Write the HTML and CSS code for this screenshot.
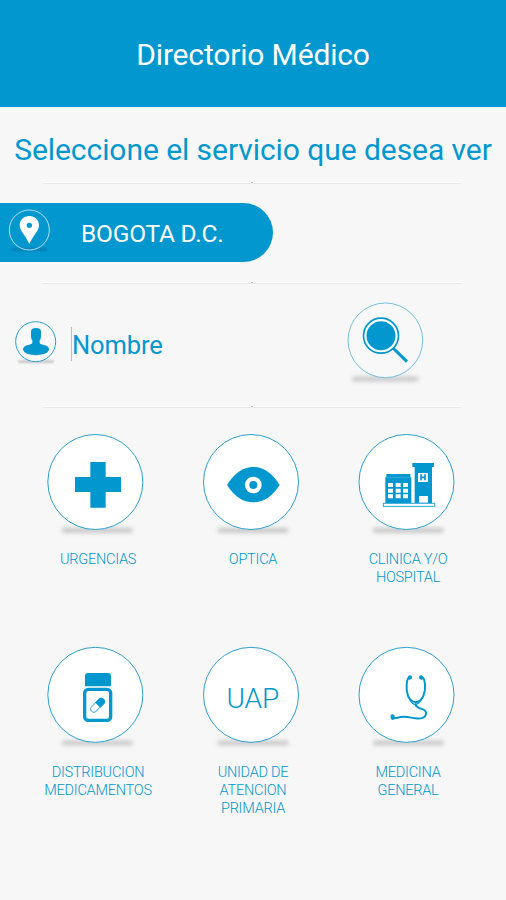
FILE: index.html
```html
<!DOCTYPE html>
<html lang="es">
<head>
<meta charset="utf-8">
<title>Directorio Médico</title>
<link rel="stylesheet" href="styles.css">
</head>
<body>
<svg class="defs" width="0" height="0" aria-hidden="true">
  <defs>
    <filter id="soft" x="-20%" y="-200%" width="140%" height="500%"><feGaussianBlur stdDeviation="6"/></filter>
    <filter id="soft-small" x="-20%" y="-150%" width="140%" height="400%"><feGaussianBlur stdDeviation="3"/></filter>
  </defs>
</svg>
<header class="header"><h1 class="title">Directorio Médico</h1></header>
<main>
  <h2 class="heading">Seleccione el servicio que desea ver</h2>
  <div class="rule"></div>
  <div class="city">
    <svg class="city-icon" viewBox="0 0 150 150">
      <rect class="city-shadow" x="36" y="135" width="106" height="9" rx="5" filter="url(#soft-small)"/>
      <circle class="city-ring" cx="88" cy="81" r="60"/>
      <path class="white" fill-rule="evenodd" d="M88 39C71 39 59 51 59 67C59 84 77 98 88 123C99 98 117 84 117 67C117 51 105 39 88 39ZM88 59A8 8 0 1 1 88 75A8 8 0 1 1 88 59Z"/>
    </svg>
    <span class="city-name">BOGOTA D.C.</span>
  </div>
  <div class="rule"></div>
  <div class="search">
    <svg class="user-icon" viewBox="0 0 180 150">
      <rect class="shadow" x="54" y="121" width="108" height="8" rx="4" filter="url(#soft-small)"/>
      <circle class="ring clear" cx="107" cy="65" r="60"/>
      <path class="blue" d="M93 33Q94 24 108 24Q122 24 123 33V49Q123 57 119 61V69Q121 73 135 76Q148 80 147 89Q145 97 132 102Q108 109 83 102Q70 97 69 88Q69 80 81 76Q95 73 97 69V61Q93 57 93 49Z"/>
    </svg>
    <span class="field">Nombre</span>
    <svg class="search-icon" viewBox="0 0 300 300">
      <rect class="shadow" x="66" y="260" width="200" height="14" rx="7" filter="url(#soft)"/>
      <circle class="ring thin" cx="166" cy="151" r="112"/>
      <circle class="lens" cx="153" cy="137" r="52.5"/>
      <circle class="blue" cx="153" cy="137" r="43.5"/>
      <path class="handle" d="M189 174L231 215"/>
    </svg>
  </div>
  <div class="rule"></div>
  <div class="services">
    <div class="service">
      <svg class="disc" viewBox="0 0 390 345">
        <rect class="shadow" x="80" y="309" width="214" height="14" rx="7" filter="url(#soft)"/>
        <circle class="ring" cx="181" cy="171" r="142.5"/>
        <path class="blue" d="M166 111h46v45h46v45h-46v47h-46v-47h-46v-45h46z"/>
      </svg>
      <p class="label">URGENCIAS</p>
    </div>
    <div class="service">
      <svg class="disc" viewBox="0 0 390 345">
        <rect class="shadow" x="82" y="309" width="214" height="14" rx="7" filter="url(#soft)"/>
        <circle class="ring" cx="183" cy="171" r="142.5"/>
        <path class="blue" d="M111 180Q144 126 190 126Q236 126 269 180Q236 232 190 232Q144 232 111 180Z"/>
        <circle class="iris" cx="190" cy="180" r="18.5"/>
      </svg>
      <p class="label">OPTICA</p>
    </div>
    <div class="service">
      <svg class="disc" viewBox="0 0 390 345">
        <rect class="shadow" x="83" y="309" width="214" height="14" rx="7" filter="url(#soft)"/>
        <circle class="ring" cx="184.5" cy="171" r="142.5"/>
        <path class="blue" d="M124 147h72v9h3v79h-78v-79h3zM202 114h65v12h-6v109h-52v-109h-7z"/>
        <path class="gap" d="M122 157h76"/>
        <path class="white" d="M129 174h15v12h-15zM152 174h15v12h-15zM174 174h15v12h-15zM129 191h15v12h-15zM152 191h15v12h-15zM174 191h15v12h-15zM129 208h15v12h-15zM152 208h15v12h-15zM174 208h15v12h-15zM219 144h30v27h-30zM222 213h27v20h-27z"/>
        <path class="hmark" d="M228 148v18M240 148v18M228 157h12"/>
        <rect class="base" x="115" y="235" width="154" height="9"/>
      </svg>
      <p class="label">CLINICA Y/O<br>HOSPITAL</p>
    </div>
    <div class="service">
      <svg class="disc" viewBox="0 -5 390 345">
        <rect class="shadow" x="80" y="303" width="214" height="14" rx="7" filter="url(#soft)"/>
        <circle class="ring" cx="181" cy="165.5" r="142.5"/>
        <path class="blue" d="M150 138v-29q0-9 9-9h60q9 0 9 9v29q0 2-2 2h-74q-2 0-2-2z"/>
        <rect class="bottle" x="149" y="149" width="78" height="93" rx="11"/>
        <g transform="translate(187.5 197) rotate(-45)">
          <rect class="pill" x="-25" y="-9.5" width="50" height="19" rx="9.5"/>
          <path class="blue" d="M1-11h15a11 11 0 0 1 0 22h-15z"/>
        </g>
      </svg>
      <p class="label">DISTRIBUCION<br>MEDICAMENTOS</p>
    </div>
    <div class="service">
      <svg class="disc" viewBox="0 -5 390 345">
        <rect class="shadow" x="82" y="303" width="214" height="14" rx="7" filter="url(#soft)"/>
        <circle class="ring" cx="183" cy="165.5" r="142.5"/>
        <text class="uap" x="188.5" y="205" text-anchor="middle">UAP</text>
      </svg>
      <p class="label">UNIDAD DE<br>ATENCION<br>PRIMARIA</p>
    </div>
    <div class="service">
      <svg class="disc" viewBox="0 -5 390 345">
        <rect class="shadow" x="83" y="303" width="214" height="14" rx="7" filter="url(#soft)"/>
        <circle class="ring" cx="184.5" cy="165.5" r="142.5"/>
        <path class="tube" d="M194 113Q187 113 185 135C183 158 190 181 205 186Q211 188 218 186C234 181 242 158 240 135Q238 113 230 113"/>
        <path class="tube fine" d="M194 177Q201 194 211 194Q221 194 230 177"/>
        <path class="tube" d="M211 194C218 212 242 204 243 219C244 236 226 238 212 236C192 233 174 227 159 234Q152 236 144 234"/>
        <path class="blue" d="M190 109q5-5 10 0l1 7-7 5-6-4zM223 109q5-5 10 0l3 8-7 4-7-5zM137 226q5-4 11 0l2 12-9 4q-6-5-4-16z"/>
      </svg>
      <p class="label">MEDICINA<br>GENERAL</p>
    </div>
  </div>
</main>
</body>
</html>
```
FILE: styles.css
```css
* { box-sizing: border-box; }
body {
  margin: 0;
  width: 506px;
  height: 900px;
  overflow: hidden;
  background: #f7f7f7;
  color: #0297cf;
  font-family: Roboto, "Liberation Sans", sans-serif;
}
h1, h2, p { margin: 0; font-weight: 400; }
svg { display: block; flex: none; }
.defs { position: absolute; }

.header {
  height: 107px;
  padding-top: 35px;
  background: #0297cf;
  color: #fff;
  text-align: center;
}
.title { font-size: 30px; line-height: 40px; letter-spacing: -0.16px; }
.heading {
  height: 75px;
  padding-top: 23px;
  font-size: 30px;
  line-height: 40px;
  letter-spacing: -0.06px;
  text-align: center;
  white-space: nowrap;
}

.rule {
  width: 418px;
  height: 2px;
  margin-left: 43px;
  background:
    linear-gradient(#bbb, #bbb) 208px 0 / 2px 1px no-repeat,
    linear-gradient(#fff 50%, #e8e8e8 50%);
}

.city {
  display: flex;
  width: 273px;
  height: 59px;
  margin: 19px 0 20px;
  border-radius: 0 30px 30px 0;
  background: #0297cf;
  color: #fff;
}
.city-icon { width: 50px; height: 50px; }
.city-name {
  margin-left: 31px;
  font-size: 24.5px;
  line-height: 61px;
  letter-spacing: -0.22px;
  white-space: nowrap;
}
.city-ring { fill: none; stroke: #b5dff0; stroke-width: 3; }
.city-shadow { fill: #0380b4; }

.search { display: flex; height: 122px; padding-top: 6px; }
.user-icon { width: 60px; height: 50px; margin-top: 30px; }
.field {
  width: 259px;
  height: 34px;
  margin: 37px 0 0 11px;
  border-left: 1px solid #8ecbe5;
  font-size: 25.5px;
  line-height: 37px;
  letter-spacing: -0.1px;
}
.search-icon { width: 100px; height: 100px; }

.services {
  display: grid;
  grid-template-columns: repeat(3, 155px);
  grid-template-rows: 213.4px 213.4px;
  margin: 17px 0 0 35px;
}
.service { width: 126px; }
.disc { width: 130px; height: 115px; }
.label {
  padding-top: 11px;
  font-size: 14.5px;
  font-weight: 300;
  line-height: 18px;
  letter-spacing: -0.24px;
  text-align: center;
}

.blue { fill: #0297cf; }
.white { fill: #fff; }
.shadow { fill: #c4c4c4; }
.ring { fill: #fff; stroke: #2c9fcd; stroke-width: 3; }
.ring.clear { fill: #f9f9f9; }
.ring.thin { fill: #f8f8f8; stroke: #5db5d9; stroke-width: 2.5; }
.lens { fill: #fff; stroke: #0297cf; stroke-width: 5; }
.handle { fill: none; stroke: #0297cf; stroke-width: 9; }
.iris { fill: #0297cf; stroke: #fff; stroke-width: 13; }
.gap { stroke: #4db5dc; stroke-width: 2; }
.hmark { fill: none; stroke: #0297cf; stroke-width: 5; }
.base { fill: #fff; stroke: #2ea6d4; stroke-width: 3; }
.bottle { fill: #fff; stroke: #0297cf; stroke-width: 10; }
.pill { fill: #fff; stroke: #4db5dc; stroke-width: 3; }
.uap { fill: #0297cf; font-size: 84px; font-weight: 300; }
.tube { fill: none; stroke: #0297cf; stroke-width: 6; stroke-linecap: round; }
.tube.fine { stroke-width: 4; }
```
